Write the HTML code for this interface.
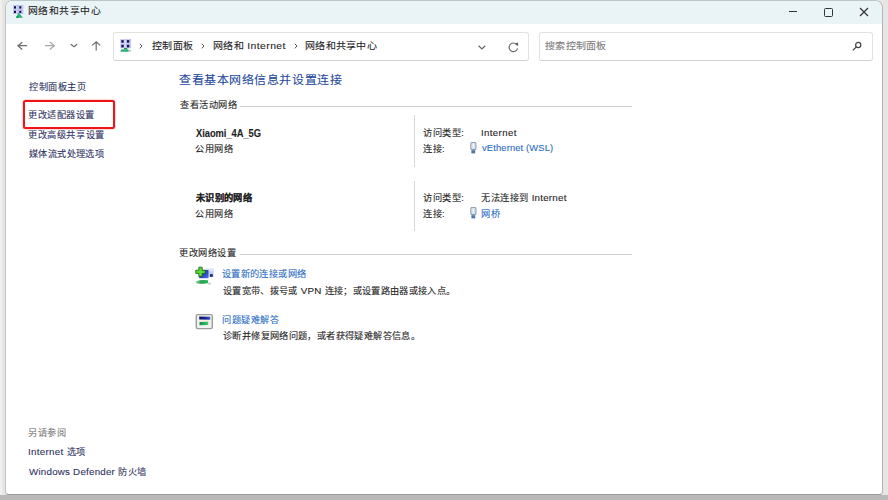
<!DOCTYPE html>
<html lang="zh-CN"><head><meta charset="utf-8">
<style>
html,body{margin:0;padding:0;width:888px;height:500px;overflow:hidden;background:#e6e6e6;}
body{font-family:"Liberation Sans",sans-serif;position:relative;}
.win{position:absolute;left:5px;top:0;width:876px;height:493px;background:#fff;border:1px solid #b4b4b4;border-left-color:#c0c0c0;border-top-color:#bcc6c6;border-bottom-color:#9a9a9a;border-radius:7px 8px 4px 4px;overflow:hidden;}
.tb{position:absolute;left:0;top:0;width:100%;height:23px;background:#eaf4f6;}
.t{position:absolute;white-space:nowrap;line-height:1;transform-origin:0 0;}
.abs{position:absolute;}
.box{position:absolute;background:#fff;border:1px solid #e2e2e2;border-bottom-color:#d2d2d2;border-radius:3px;}
.lnk{color:#2e3262;}
.blue{color:#2a6cc4;}
.dark{color:#1e1e1e;}
.hr{position:absolute;height:1px;background:#d0d0d0;}
.vr{position:absolute;width:1px;background:#d8d8d8;}
</style></head><body>
<div class="abs" style="left:0;top:495px;width:888px;height:5px;background:#b9b9b9"></div>
<div class="abs" style="left:0;top:0;width:2px;height:495px;background:#f1f1ec"></div>
<div class="win"></div>
<!-- title bar -->
<div class="abs" style="left:6px;top:1px;width:876px;height:23px;background:#eaf4f6;border-radius:7px 7px 0 0;"></div>
<svg class="abs" style="left:0;top:0" width="30" height="22" viewBox="0 0 30 22">
 <rect x="13.4" y="5.4" width="4.4" height="4" fill="#d4d4f4" stroke="#a8acec" stroke-width="0.5"/><rect x="18.6" y="5.4" width="4.4" height="4" fill="#d4d4f4" stroke="#a8acec" stroke-width="0.5"/>
 <rect x="13.4" y="10.2" width="4.4" height="3.6" fill="#d4d4f4" stroke="#a8acec" stroke-width="0.5"/><rect x="18.6" y="10.2" width="4.4" height="3.6" fill="#d4d4f4" stroke="#a8acec" stroke-width="0.5"/>
 <rect x="14" y="6.2" width="2" height="2.4" fill="#10104a"/><rect x="19.3" y="6.2" width="2" height="2.4" fill="#10104a"/>
 <rect x="14" y="10.8" width="2" height="2.2" fill="#10104a"/><rect x="19.3" y="10.8" width="2" height="2.2" fill="#10104a"/>
 <path d="M15.8 17.8 L18.8 12.8 L23 17.8 Z" fill="#22b478"/>
 <path d="M15.8 17.8 L17.2 15.4 L19.2 17.8 Z" fill="#129a5c"/>
</svg>
<!-- window controls -->
<div class="abs" style="left:789px;top:11px;width:8px;height:1.4px;background:#333;"></div>
<div class="abs" style="left:824px;top:8px;width:6.5px;height:6.5px;border:1.3px solid #333;border-radius:1.5px;"></div>
<svg class="abs" style="left:859px;top:7px" width="10" height="10" viewBox="0 0 10 10"><path d="M1 1 L9 9 M9 1 L1 9" stroke="#333" stroke-width="1.2"/></svg>

<!-- nav -->
<svg class="abs" style="left:14px;top:38px" width="100" height="16" viewBox="0 0 100 16">
 <path d="M8.3 4.2 L3.9 7.7 L8.3 11.5 M3.9 7.7 L13.1 7.7" fill="none" stroke="#6c6c6c" stroke-width="1.2"/>
 <path d="M35.8 4 L40.4 7.7 L35.8 11.5 M40.4 7.7 L31 7.7" fill="none" stroke="#a8a8a8" stroke-width="1.2"/>
 <path d="M56.7 6.2 L60 8.7 L63.1 6.2" fill="none" stroke="#6c6c6c" stroke-width="1.2"/>
 <path d="M78.2 7.4 L82.2 3.9 L86.2 7.4 M82.2 3.9 L82.2 12.4" fill="none" stroke="#6c6c6c" stroke-width="1.2"/>
</svg>
<div class="box" style="left:113px;top:32px;width:414px;height:27px;"></div>
<svg class="abs" style="left:110px;top:30px" width="30" height="30" viewBox="110 30 30 30">
 <rect x="120.8" y="39.6" width="4.4" height="3.8" fill="#d4d4f4" stroke="#a8acec" stroke-width="0.5"/><rect x="126.4" y="39.6" width="4.4" height="3.8" fill="#d4d4f4" stroke="#a8acec" stroke-width="0.5"/>
 <rect x="120.8" y="44.2" width="4.4" height="3.8" fill="#d4d4f4" stroke="#a8acec" stroke-width="0.5"/><rect x="126.4" y="44.2" width="4.4" height="3.8" fill="#d4d4f4" stroke="#a8acec" stroke-width="0.5"/>
 <rect x="121.3" y="40.1" width="2.4" height="2.6" fill="#14145a"/><rect x="126.9" y="40.1" width="2.4" height="2.6" fill="#14145a"/>
 <rect x="121.3" y="44.8" width="2.4" height="2.6" fill="#14145a"/><rect x="126.9" y="44.8" width="2.4" height="2.6" fill="#14145a"/>
 <path d="M124.2 48 L127 48 L127.6 49.6 L123.6 49.6 Z" fill="#2a8a5a"/>
 <path d="M121.2 49.6 L128.6 49.6 L128.8 51.8 L120.4 51.8 Z" fill="#20b074"/><rect x="128.6" y="50" width="2.6" height="1.6" fill="#c8c8c8"/>
</svg>
<svg class="abs" style="left:136px;top:40px" width="10" height="12" viewBox="0 0 10 12"><path d="M3.8 3.8 L6 6 L3.8 8.4" fill="none" stroke="#555" stroke-width="1"/></svg>
<svg class="abs" style="left:198px;top:40px" width="10" height="12" viewBox="0 0 10 12"><path d="M3.8 3.8 L6 6 L3.8 8.4" fill="none" stroke="#555" stroke-width="1"/></svg>
<svg class="abs" style="left:291px;top:40px" width="10" height="12" viewBox="0 0 10 12"><path d="M3.8 3.8 L6 6 L3.8 8.4" fill="none" stroke="#555" stroke-width="1"/></svg>
<svg class="abs" style="left:470px;top:36px" width="60" height="20" viewBox="470 36 60 20">
 <path d="M478.6 45.8 L481.9 49 L485.2 45.8" fill="none" stroke="#666" stroke-width="1.2"/>
 <path d="M516.6 44.4 A4.3 4.3 0 1 0 517.6 48.4" fill="none" stroke="#707070" stroke-width="1.2"/>
 <path d="M514.6 43.4 L518.2 42.4 L517.8 46.2 Z" fill="#606060"/>
</svg>
<div class="box" style="left:539px;top:32px;width:332px;height:27px;"></div>
<svg class="abs" style="left:850px;top:40px" width="14" height="13" viewBox="0 0 14 13"><circle cx="8.2" cy="5" r="2.6" fill="none" stroke="#444" stroke-width="1.2"/><path d="M6.4 6.9 L2.8 10.4" stroke="#444" stroke-width="1.3"/></svg>

<!-- left panel -->
<div class="abs" style="left:23px;top:100px;width:88px;height:25px;border:2px solid #f01418;border-radius:2.5px;box-shadow:0 0 0 0.25px rgba(240,20,24,0.6);"></div>

<!-- main -->
<div class="hr" style="left:240px;top:106px;width:392px;"></div>

<div class="vr" style="left:414px;top:115px;height:52px;"></div>
<svg class="abs" style="left:460px;top:138px" width="24" height="20" viewBox="460 138 24 20">
 <rect x="470.4" y="142" width="6" height="8.2" rx="1.6" fill="#7a8ca2"/>
 <rect x="471.2" y="142.8" width="4.4" height="6.4" rx="1" fill="#d6e0ec"/>
 <rect x="472.8" y="143.8" width="1" height="3.6" fill="#ffffff"/>
 <rect x="471.4" y="150.2" width="3.8" height="3.2" fill="#4d7aa4"/>
</svg>

<div class="vr" style="left:414px;top:181px;height:50px;"></div>
<svg class="abs" style="left:460px;top:203px" width="24" height="20" viewBox="460 203 24 20">
 <rect x="470.4" y="207" width="6" height="8.2" rx="1.6" fill="#7a8ca2"/>
 <rect x="471.2" y="207.8" width="4.4" height="6.4" rx="1" fill="#d6e0ec"/>
 <rect x="472.8" y="208.8" width="1" height="3.6" fill="#ffffff"/>
 <rect x="471.4" y="215.2" width="3.8" height="3.2" fill="#4d7aa4"/>
</svg>

<div class="hr" style="left:240px;top:254px;width:392px;"></div>

<svg class="abs" style="left:190px;top:262px" width="28" height="28" viewBox="190 262 28 28">
 <defs><linearGradient id="gmon" x1="0" y1="0" x2="1" y2="1"><stop offset="0" stop-color="#0a1a90"/><stop offset="1" stop-color="#4a70e8"/></linearGradient>
 <linearGradient id="gcab" x1="0" y1="0" x2="1" y2="0"><stop offset="0" stop-color="#b0d8b8"/><stop offset="0.4" stop-color="#26a050"/><stop offset="1" stop-color="#2ab860"/></linearGradient></defs>
 <rect x="205" y="268.7" width="8.5" height="8.4" fill="#c0ccf2"/>
 <rect x="205.5" y="269.2" width="7.5" height="2" fill="#e4e8fa"/>
 <rect x="210" y="274.2" width="2.8" height="2.6" fill="#1a2470"/>
 <rect x="199.2" y="270" width="9.3" height="8.2" fill="url(#gmon)"/>
 <path d="M198.8 267.2 h3.4 v3 h3 v3.2 h-3 v3 h-3.4 v-3 h-3 v-3.2 h3 z" fill="#58dc3a" stroke="#1e5a12" stroke-width="0.8"/>
 <path d="M195.8 281.2 Q201 279.6 208 280.2 L208 283.2 Q201 284 196.2 283.6 Z" fill="url(#gcab)"/>
 <rect x="208" y="282.8" width="3" height="1.6" fill="#c8c8c8"/>
</svg>

<svg class="abs" style="left:190px;top:308px" width="28" height="26" viewBox="190 308 28 26">
 <defs><linearGradient id="gnav" x1="0" y1="0" x2="1" y2="0"><stop offset="0" stop-color="#0c145a"/><stop offset="0.6" stop-color="#1a2a9a"/><stop offset="1" stop-color="#3a58c8"/></linearGradient>
 <linearGradient id="ggrn" x1="0" y1="0" x2="1" y2="0"><stop offset="0" stop-color="#1a8a48"/><stop offset="1" stop-color="#30d070"/></linearGradient></defs>
 <rect x="196.3" y="314.6" width="16" height="14" rx="1.5" fill="#f2f2f2" stroke="#9c9c9c" stroke-width="1.4"/>
 <path d="M199.2 316.6 L210.2 316.8 L210.2 319.8 L199.2 319.4 Z" fill="url(#gnav)"/>
 <rect x="199.2" y="320.2" width="10" height="1.4" fill="#fce8d8"/>
 <path d="M199.5 322 L208.2 321.8 L208.2 325 L199.5 325.2 Z" fill="url(#ggrn)"/>
</svg>
<div class="t" id="title" style="left:27.96px;top:7.44px;font-size:19.6px;font-weight:400;color:#1e1e1e;letter-spacing:0.900px;-webkit-text-stroke:0.20px currentColor;transform:scale(0.5000,0.4650)">网络和共享中心</div>
<div class="t" id="bc1" style="left:151.92px;top:41.24px;font-size:20px;font-weight:400;color:#1e1e1e;letter-spacing:0.600px;-webkit-text-stroke:0.20px currentColor;transform:scale(0.5000,0.4650)">控制面板</div>
<div class="t" id="bc2" style="left:212.68px;top:41.24px;font-size:20px;font-weight:400;color:#1e1e1e;letter-spacing:0.600px;-webkit-text-stroke:0.20px currentColor;transform:scale(0.5000,0.4650)">网络和<span style="font-size:20.8px;letter-spacing:0.849px"> Internet</span></div>
<div class="t" id="bc3" style="left:305.44px;top:41.24px;font-size:20px;font-weight:400;color:#1e1e1e;letter-spacing:0.600px;-webkit-text-stroke:0.20px currentColor;transform:scale(0.5000,0.4650)">网络和共享中心</div>
<div class="t" id="search" style="left:545.36px;top:41.24px;font-size:20px;font-weight:400;color:#7c7c7c;letter-spacing:0.600px;-webkit-text-stroke:0.20px currentColor;transform:scale(0.5000,0.4650)">搜索控制面板</div>
<div class="t" id="l1" style="left:29.08px;top:82.84px;font-size:18.4px;font-weight:400;color:#2e3262;letter-spacing:1.100px;-webkit-text-stroke:0.20px currentColor;transform:scale(0.5000,0.4650)">控制面板主页</div>
<div class="t" id="l2" style="left:28.20px;top:110.72px;font-size:18.4px;font-weight:400;color:#2e3262;letter-spacing:1.100px;-webkit-text-stroke:0.20px currentColor;transform:scale(0.5000,0.4650)">更改适配器设置</div>
<div class="t" id="l3" style="left:28.20px;top:130.64px;font-size:18.4px;font-weight:400;color:#2e3262;letter-spacing:1.237px;-webkit-text-stroke:0.20px currentColor;transform:scale(0.5000,0.4650)">更改高级共享设置</div>
<div class="t" id="l4" style="left:29.00px;top:150.28px;font-size:18.4px;font-weight:400;color:#2e3262;letter-spacing:0.780px;-webkit-text-stroke:0.20px currentColor;transform:scale(0.5000,0.4650)">媒体流式处理选项</div>
<div class="t" id="see" style="left:28.28px;top:428.72px;font-size:18.4px;font-weight:400;color:#7a7a7a;letter-spacing:1.100px;-webkit-text-stroke:0.20px currentColor;transform:scale(0.5000,0.4650)">另请参阅</div>
<div class="t" id="ie" style="left:28.28px;top:448.20px;font-size:18.4px;font-weight:400;color:#2e3262;letter-spacing:1.100px;-webkit-text-stroke:0.20px currentColor;transform:scale(0.5000,0.4650)"><span style="font-size:19.6px;letter-spacing:0.600px">Internet </span>选项</div>
<div class="t" id="fw" style="left:29.00px;top:467.60px;font-size:18.4px;font-weight:400;color:#2e3262;letter-spacing:1.100px;-webkit-text-stroke:0.20px currentColor;transform:scale(0.5000,0.4650)"><span style="font-size:19.6px;letter-spacing:0.412px">Windows Defender </span>防火墙</div>
<div class="t" id="head" style="left:179.44px;top:74.52px;font-size:24px;font-weight:400;color:#23479c;letter-spacing:1.120px;-webkit-text-stroke:0.20px currentColor;transform:scale(0.5000,0.4650)">查看基本网络信息并设置连接</div>
<div class="t" id="act" style="left:180.00px;top:100.52px;font-size:18.4px;font-weight:400;color:#1e1e1e;letter-spacing:1.100px;-webkit-text-stroke:0.20px currentColor;transform:scale(0.5000,0.4650)">查看活动网络</div>
<div class="t" id="xm" style="left:195.92px;top:128.40px;font-size:20.8px;font-weight:700;color:#1e1e1e;letter-spacing:-0.105px;-webkit-text-stroke:0.20px currentColor;transform:scale(0.4500,0.5000)">Xiaomi_4A_5G</div>
<div class="t" id="pub1" style="left:195.20px;top:144.68px;font-size:18.4px;font-weight:400;color:#1e1e1e;letter-spacing:1.100px;-webkit-text-stroke:0.20px currentColor;transform:scale(0.5000,0.4650)">公用网络</div>
<div class="t" id="acc1" style="left:422.76px;top:129.40px;font-size:18.4px;font-weight:400;color:#1e1e1e;letter-spacing:1.100px;-webkit-text-stroke:0.20px currentColor;transform:scale(0.5000,0.4650)">访问类型:</div>
<div class="t" id="inet" style="left:481.44px;top:128.16px;font-size:19.2px;font-weight:400;color:#1e1e1e;letter-spacing:0.800px;-webkit-text-stroke:0.20px currentColor;transform:scale(0.5000,0.5000)">Internet</div>
<div class="t" id="con1" style="left:422.76px;top:144.72px;font-size:18.4px;font-weight:400;color:#1e1e1e;letter-spacing:1.100px;-webkit-text-stroke:0.20px currentColor;transform:scale(0.5000,0.4650)">连接:</div>
<div class="t" id="veth" style="left:481.92px;top:143.40px;font-size:18.8px;font-weight:400;color:#2a6cc4;letter-spacing:0.246px;-webkit-text-stroke:0.20px currentColor;transform:scale(0.5000,0.5000)">vEthernet (WSL)</div>
<div class="t" id="un" style="left:195.84px;top:193.68px;font-size:18.4px;font-weight:700;color:#1e1e1e;letter-spacing:0.748px;-webkit-text-stroke:0.24px currentColor;transform:scale(0.5000,0.4650)">未识别的网络</div>
<div class="t" id="pub2" style="left:195.44px;top:209.52px;font-size:18.4px;font-weight:400;color:#1e1e1e;letter-spacing:1.100px;-webkit-text-stroke:0.20px currentColor;transform:scale(0.5000,0.4650)">公用网络</div>
<div class="t" id="acc2" style="left:422.76px;top:194.00px;font-size:18.4px;font-weight:400;color:#1e1e1e;letter-spacing:1.100px;-webkit-text-stroke:0.20px currentColor;transform:scale(0.5000,0.4650)">访问类型:</div>
<div class="t" id="noi" style="left:481.20px;top:194.00px;font-size:18.4px;font-weight:400;color:#1e1e1e;letter-spacing:1.100px;-webkit-text-stroke:0.20px currentColor;transform:scale(0.5000,0.4650)">无法连接到<span style="font-size:19.6px;letter-spacing:0.422px"> Internet</span></div>
<div class="t" id="con2" style="left:422.76px;top:209.76px;font-size:18.4px;font-weight:400;color:#1e1e1e;letter-spacing:1.100px;-webkit-text-stroke:0.20px currentColor;transform:scale(0.5000,0.4650)">连接:</div>
<div class="t" id="qiao" style="left:481.20px;top:209.76px;font-size:18.4px;font-weight:400;color:#2a6cc4;letter-spacing:1.100px;-webkit-text-stroke:0.20px currentColor;transform:scale(0.5000,0.4650)">网桥</div>
<div class="t" id="chg" style="left:179.44px;top:248.64px;font-size:18.4px;font-weight:400;color:#1e1e1e;letter-spacing:1.100px;-webkit-text-stroke:0.20px currentColor;transform:scale(0.5000,0.4650)">更改网络设置</div>
<div class="t" id="new" style="left:222.20px;top:269.56px;font-size:18.4px;font-weight:400;color:#2a6cc4;letter-spacing:0.740px;-webkit-text-stroke:0.20px currentColor;transform:scale(0.5000,0.4650)">设置新的连接或网络</div>
<div class="t" id="d1" style="left:222.92px;top:286.52px;font-size:18.4px;font-weight:400;color:#1e1e1e;letter-spacing:0.652px;-webkit-text-stroke:0.20px currentColor;transform:scale(0.5000,0.4650)">设置宽带、拨号或<span style="font-size:19.6px;letter-spacing:0.600px"> VPN </span>连接；或设置路由器或接入点。</div>
<div class="t" id="ts" style="left:222.20px;top:315.68px;font-size:18.4px;font-weight:400;color:#2a6cc4;letter-spacing:1.100px;-webkit-text-stroke:0.20px currentColor;transform:scale(0.5000,0.4650)">问题疑难解答</div>
<div class="t" id="d2" style="left:222.68px;top:332.28px;font-size:18.4px;font-weight:400;color:#1e1e1e;letter-spacing:0.772px;-webkit-text-stroke:0.20px currentColor;transform:scale(0.5000,0.4650)">诊断并修复网络问题，或者获得疑难解答信息。</div>
</body></html>
